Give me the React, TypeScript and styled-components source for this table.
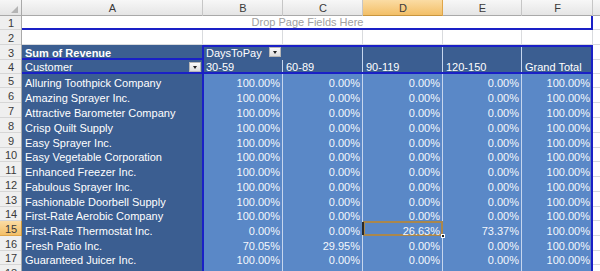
import React from 'react'
import styled, { createGlobalStyle, css } from 'styled-components'

const BLUE = '#1a20c6'
const DARK = '#3b5e91'
const LIGHT = '#5a88c7'
const SEP = '#c6d6ee'
const GRID = '#d9dbde'

const GlobalStyle = createGlobalStyle`
  html, body {
    margin: 0;
    padding: 0;
    background: #ffffff;
    overflow: hidden;
  }
  body {
    font-family: 'Liberation Sans', Arial, sans-serif;
    font-size: 11px;
  }
`

const ROW_HEIGHTS = [14, 15, 15, 14, 14, 15, 15, 15, 15, 14, 15, 15, 15, 14, 15, 15, 14, 15]
const COLUMNS = ['A', 'B', 'C', 'D', 'E', 'F', 'G']
const ACTIVE_COL = 'D'
const ACTIVE_ROW = 15

const Sheet = styled.div`
  display: grid;
  grid-template-columns: 22px 181px 80px 80px 80px 79px 71px 64px;
  grid-template-rows: 16px ${ROW_HEIGHTS.map((h) => `${h}px`).join(' ')};
  width: 600px;
  height: 271px;
  overflow: hidden;
  color: #ffffff;
`

const Corner = styled.div`
  position: relative;
  background: linear-gradient(#f6f6f6, #e3e3e3);
  box-shadow: inset -1px -1px 0 #a9a9a9;

  &::after {
    content: '';
    position: absolute;
    right: 4px;
    bottom: 3px;
    border-style: solid;
    border-width: 0 0 7px 7px;
    border-color: transparent transparent #b4b4b4 transparent;
  }
`

const ColHead = styled.div<{ $active?: boolean }>`
  display: flex;
  justify-content: center;
  padding-top: 2px;
  line-height: 13px;
  color: #3a3a3a;
  background: ${(p) =>
    p.$active ? 'linear-gradient(#fbdca4, #f2bd63)' : 'linear-gradient(#f7f7f7, #e4e4e4)'};
  box-shadow: inset -1px 0 0 ${(p) => (p.$active ? '#e0a64a' : '#c6c6c6')},
    inset 0 -1px 0 ${(p) => (p.$active ? '#c8953e' : '#a9a9a9')};
`

const RowHead = styled.div<{ $active?: boolean }>`
  display: flex;
  justify-content: center;
  align-items: flex-end;
  padding-bottom: 1px;
  line-height: 11px;
  color: #3a3a3a;
  background: ${(p) => (p.$active ? 'linear-gradient(#fbdca4, #f2bd63)' : '#efefef')};
  box-shadow: inset -1px 0 0 ${(p) => (p.$active ? '#c8953e' : '#a9a9a9')},
    inset 0 -1px 0 ${(p) => (p.$active ? '#e0a64a' : '#d6d6d6')};
`

const Blank = styled.div`
  background: #ffffff;
  box-shadow: inset -1px 0 0 ${GRID}, inset 0 -1px 0 ${GRID};
`

const DropZone = styled.div`
  grid-column: 2 / 8;
  display: flex;
  justify-content: center;
  align-items: flex-start;
  line-height: 12px;
  color: #a0a0a0;
  background: #ffffff;
  box-shadow: inset -2px 0 0 ${BLUE}, inset 0 -2px 0 ${BLUE};
`

type Edges = {
  $top?: boolean
  $bottom?: boolean
  $left?: boolean
  $right?: boolean
  $divider?: boolean
  $sep?: boolean
}

const edgeShadow = (p: Edges) => {
  const s: string[] = []
  if (p.$top) s.push(`inset 0 2px 0 ${BLUE}`)
  if (p.$bottom) s.push(`inset 0 -2px 0 ${BLUE}`)
  if (p.$left) s.push(`inset 1px 0 0 ${BLUE}`)
  if (p.$divider) s.push(`inset -1px 0 0 ${BLUE}`)
  if (p.$right) s.push(`inset -2px 0 0 ${BLUE}`)
  if (p.$sep) s.push(`inset -1px 0 0 ${SEP}`)
  return s.length ? s.join(', ') : 'none'
}

const PivotCell = styled.div<
  Edges & {
    $tone: 'dark' | 'light'
    $align?: 'left' | 'right'
    $bold?: boolean
    $header?: boolean
    $selected?: boolean
  }
>`
  position: relative;
  display: flex;
  align-items: flex-end;
  justify-content: ${(p) => (p.$align === 'right' ? 'flex-end' : 'space-between')};
  padding: 0 ${(p) => (p.$align === 'right' ? '3px' : '2px')} ${(p) => (p.$header ? '2px' : '0')} 3px;
  line-height: 9px;
  white-space: nowrap;
  font-weight: ${(p) => (p.$bold ? 700 : 400)};
  background: ${(p) => (p.$tone === 'dark' ? DARK : LIGHT)};
  color: ${(p) => (p.$tone === 'dark' ? '#ffffff' : '#f4f7fc')};
  box-shadow: ${(p) => edgeShadow(p)};

  ${(p) =>
    p.$selected &&
    css`
      box-shadow: inset 0 0 0 2px #a9874d, inset -1px 0 0 #1d1d1d;
      &::before {
        content: '';
        position: absolute;
        left: -1px;
        top: 1px;
        bottom: 1px;
        width: 2px;
        background: #2a2a2a;
      }
      &::after {
        content: '';
        position: absolute;
        right: -2px;
        bottom: -2px;
        width: 4px;
        height: 4px;
        background: #1d1d1d;
        border: 1px solid #ffffff;
        box-sizing: border-box;
        z-index: 2;
      }
    `}
`

// text sits above neighbouring cells so descenders spill over like in the sheet
const CellText = styled.span`
  position: relative;
  z-index: 1;
`

const FilterButton = styled.span`
  position: relative;
  align-self: flex-start;
  margin-top: 2px;
  width: 12px;
  height: 10px;
  box-sizing: border-box;
  border: 1px solid #b6b6b6;
  background: linear-gradient(#fbfbfb, #dcdcdc);

  &::after {
    content: '';
    position: absolute;
    left: 3px;
    top: 3px;
    border-style: solid;
    border-width: 3px 2.5px 0 2.5px;
    border-color: #1e1e1e transparent transparent transparent;
  }
`

const DAYS = ['30-59', '60-89', '90-119', '120-150', 'Grand Total']

const CUSTOMERS: { name: string; values: string[] }[] = [
  { name: 'Alluring Toothpick Company', values: ['100.00%', '0.00%', '0.00%', '0.00%', '100.00%'] },
  { name: 'Amazing Sprayer Inc.', values: ['100.00%', '0.00%', '0.00%', '0.00%', '100.00%'] },
  { name: 'Attractive Barometer Company', values: ['100.00%', '0.00%', '0.00%', '0.00%', '100.00%'] },
  { name: 'Crisp Quilt Supply', values: ['100.00%', '0.00%', '0.00%', '0.00%', '100.00%'] },
  { name: 'Easy Sprayer Inc.', values: ['100.00%', '0.00%', '0.00%', '0.00%', '100.00%'] },
  { name: 'Easy Vegetable Corporation', values: ['100.00%', '0.00%', '0.00%', '0.00%', '100.00%'] },
  { name: 'Enhanced Freezer Inc.', values: ['100.00%', '0.00%', '0.00%', '0.00%', '100.00%'] },
  { name: 'Fabulous Sprayer Inc.', values: ['100.00%', '0.00%', '0.00%', '0.00%', '100.00%'] },
  { name: 'Fashionable Doorbell Supply', values: ['100.00%', '0.00%', '0.00%', '0.00%', '100.00%'] },
  { name: 'First-Rate Aerobic Company', values: ['100.00%', '0.00%', '0.00%', '0.00%', '100.00%'] },
  { name: 'First-Rate Thermostat Inc.', values: ['0.00%', '0.00%', '26.63%', '73.37%', '100.00%'] },
  { name: 'Fresh Patio Inc.', values: ['70.05%', '29.95%', '0.00%', '0.00%', '100.00%'] },
  { name: 'Guaranteed Juicer Inc.', values: ['100.00%', '0.00%', '0.00%', '0.00%', '100.00%'] },
  { name: 'Improved Exerciser Company', values: ['85.00%', '15.00%', '0.00%', '0.00%', '100.00%'] },
]

export default function App() {
  return (
    <>
      <GlobalStyle />
      <Sheet>
        <Corner />
        {COLUMNS.map((c) => (
          <ColHead key={c} $active={c === ACTIVE_COL}>
            {c}
          </ColHead>
        ))}

        <RowHead>1</RowHead>
        <DropZone>Drop Page Fields Here</DropZone>
        <Blank />

        <RowHead>2</RowHead>
        {COLUMNS.map((c) => (
          <Blank key={c} />
        ))}

        <RowHead>3</RowHead>
        <PivotCell $tone="dark" $bold $header $bottom $divider>
          <CellText>Sum of Revenue</CellText>
        </PivotCell>
        <PivotCell $tone="dark" $header $top $left>
          <CellText>DaysToPay</CellText>
          <FilterButton />
        </PivotCell>
        <PivotCell $tone="dark" $top $sep />
        <PivotCell $tone="dark" $top $sep />
        <PivotCell $tone="dark" $top $sep />
        <PivotCell $tone="dark" $top $right />
        <Blank />

        <RowHead>4</RowHead>
        <PivotCell $tone="dark" $header $bottom $divider>
          <CellText>Customer</CellText>
          <FilterButton />
        </PivotCell>
        {DAYS.map((d, i) => (
          <PivotCell
            key={d}
            $tone="dark"
            $header
            $bottom
            $left={i === 0}
            $sep={i < DAYS.length - 1}
            $right={i === DAYS.length - 1}
          >
            <CellText>{d}</CellText>
          </PivotCell>
        ))}
        <Blank />

        {CUSTOMERS.map((row, r) => {
          const rowNo = r + 5
          return (
            <React.Fragment key={row.name}>
              <RowHead $active={rowNo === ACTIVE_ROW}>{rowNo}</RowHead>
              <PivotCell $tone="dark" $divider>
                <CellText>{row.name}</CellText>
              </PivotCell>
              {row.values.map((v, i) => (
                <PivotCell
                  key={i}
                  $tone="light"
                  $align="right"
                  $left={i === 0}
                  $sep={i < row.values.length - 1}
                  $right={i === row.values.length - 1}
                  $selected={rowNo === ACTIVE_ROW && i === 2}
                >
                  <CellText>{v}</CellText>
                </PivotCell>
              ))}
              <Blank />
            </React.Fragment>
          )
        })}
      </Sheet>
    </>
  )
}
